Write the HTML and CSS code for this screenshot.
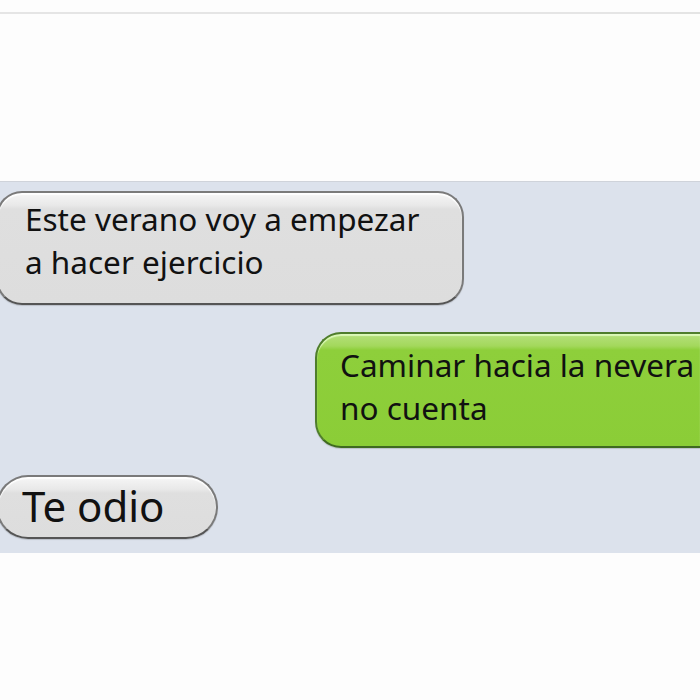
FILE: index.html
```html
<!DOCTYPE html>
<html lang="es">
<head>
    <meta charset="UTF-8">
    <meta name="viewport" content="width=device-width, initial-scale=1.0">
    <title>Chat</title>
    <link rel="stylesheet" href="styles.css">
</head>
<body>
    <div class="top-bar"></div>
    <div class="chat">
        <div class="bubble bubble-in">Este verano voy a empezar<br>a hacer ejercicio</div>
        <div class="bubble bubble-out">Caminar hacia la nevera<br>no cuenta</div>
        <div class="bubble bubble-in bubble-short">Te odio</div>
    </div>
</body>
</html>
```

FILE: styles.css
```css
body {
    margin: 0;
    background-color: #fdfdfd;
    font-family: 'Noto Sans', sans-serif;
    color: #111;
    overflow: hidden;
    height: 700px;
}
.top-bar {
    height: 12px;
    border-bottom: 2px solid #e5e5e5;
}
.chat {
    margin-top: 167px;
    height: 362px;
    padding-top: 9px;
    background-color: #dce2ec;
    border-top: 1px solid #cfd3da;
    display: flex;
    flex-direction: column;
    gap: 27px;
    overflow: hidden;
}
.bubble {
    box-sizing: border-box;
    border: 2px solid #7a7a7a;
    border-bottom-color: #555;
    font-size: 31.5px;
    line-height: 43px;
    white-space: nowrap;
}
/* incoming bubbles start just past the left edge */
.bubble-in {
    margin-left: -4px;
    width: 468px;
    height: 114px;
    padding: 4px 0 0 27px;
    border-radius: 26px;
    background: linear-gradient(to bottom, #f6f6f6 0px, #e9e9e9 12px, #dfdfdf 16px, #dddddd 100%);
    box-shadow: inset 0 2px 1px rgba(255, 255, 255, 0.9), 0 1px 1px rgba(0, 0, 0, 0.15);
}
/* outgoing bubble runs off the right edge */
.bubble-out {
    margin-left: 315px;
    width: 385px;
    height: 116px;
    padding: 9px 0 0 23px;
    border-radius: 26px 0 0 26px;
    border-color: #4f7d2c;
    border-bottom-color: #3f6a20;
    border-right: none;
    background: linear-gradient(to bottom, #b5e07c 0px, #a3d85c 12px, #8ecf3b 16px, #8bcd37 100%);
    box-shadow: inset 0 2px 1px rgba(230, 255, 200, 0.8), 0 1px 1px rgba(0, 0, 0, 0.15);
}
.bubble-short {
    width: 222px;
    height: 64px;
    padding: 0 0 0 24px;
    border-radius: 32px;
    font-size: 42px;
    line-height: 58px;
}
```
